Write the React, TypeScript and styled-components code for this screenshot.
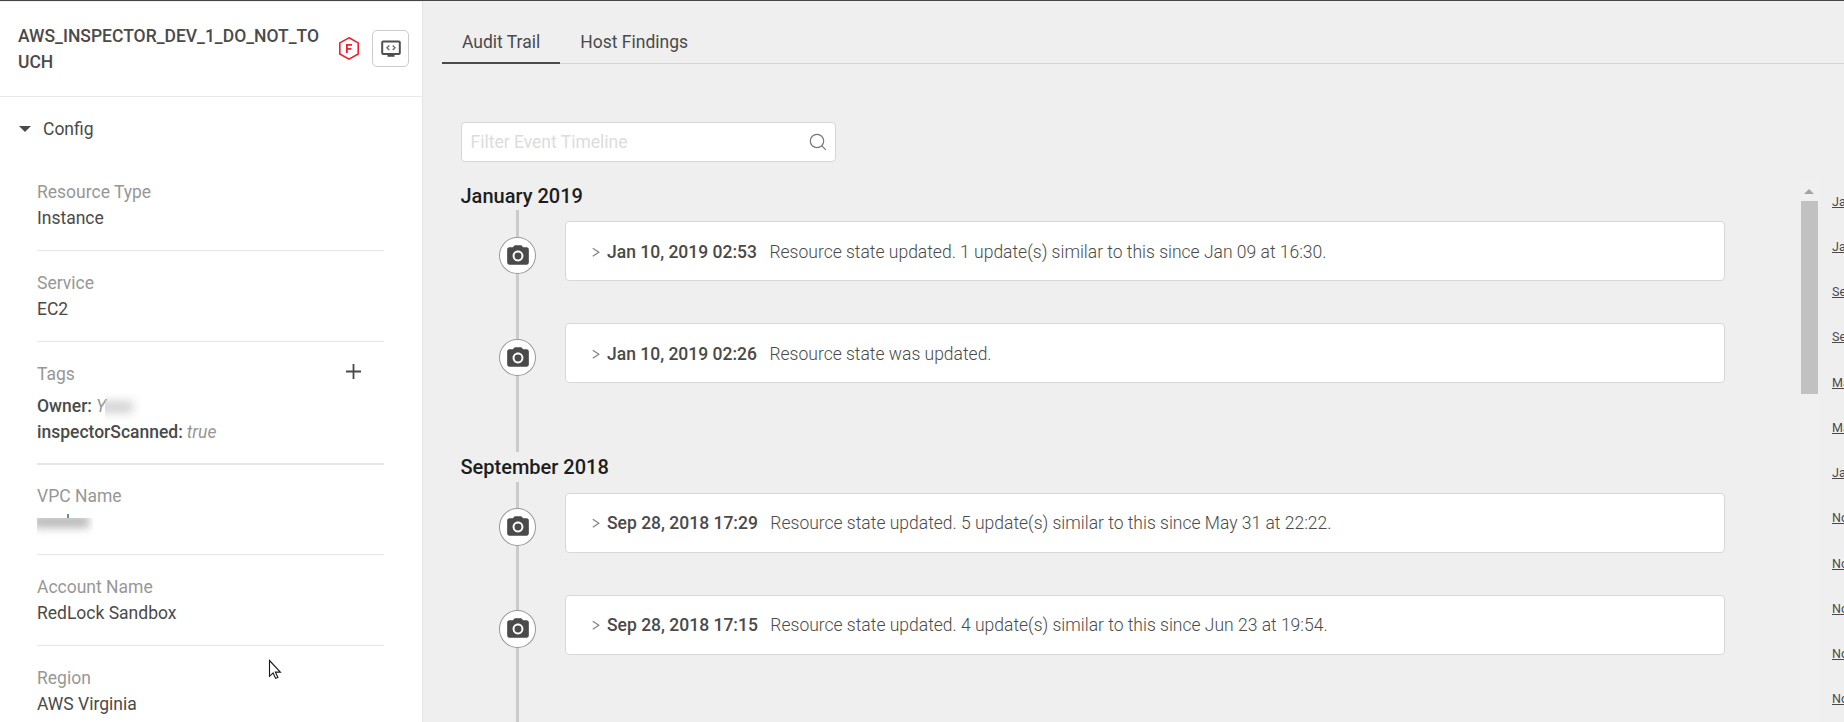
import React from "react";
import styled, { createGlobalStyle } from "styled-components";

const GlobalStyle = createGlobalStyle`
  *, *::before, *::after { box-sizing: border-box; }
  body {
    margin: 0;
    overflow: hidden;
    background: #efefef;
    color: #4a4a4a;
    font-family: Roboto, "Liberation Sans", sans-serif;
    font-size: 17.5px;
    line-height: 26px;
  }
`;

const Page = styled.div`
  display: flex;
  width: 1844px;
  height: 722px;
  overflow: hidden;
  border-top: 1px solid #454545;
`;

const Sidebar = styled.aside`
  position: relative;
  flex: none;
  width: 423px;
  background: #fff;
  border-top: 1px solid #efefef;
  border-right: 1px solid #e4e4e4;
`;

const SidebarHeader = styled.header`
  display: flex;
  align-items: flex-start;
  height: 95px;
  padding: 21px 13px 0 18px;
  border-bottom: 1px solid #e9e9e9;
`;

const ResourceTitle = styled.h1`
  width: 304px;
  margin: 0;
  font-size: 17.5px;
  font-weight: 500;
  word-break: break-all;
`;

const HexIcon = styled.svg`
  flex: none;
  margin: 13px 12px 0 16px;
`;

const ConsoleButton = styled.button`
  display: flex;
  align-items: center;
  justify-content: center;
  width: 37px;
  height: 37px;
  margin-top: 7px;
  padding: 0;
  background: #fff;
  border: 1px solid #ccc;
  border-radius: 5px;
`;

const SectionToggle = styled.div`
  display: flex;
  align-items: center;
  gap: 12.5px;
  padding: 19px 18px 18px 18.5px;
`;

const Caret = styled.span`
  border: 6.5px solid transparent;
  border-top: 6px solid #4a4a4a;
  border-bottom: 0;
`;

const Properties = styled.div`
  padding: 0 38px 0 37px;
`;

const Property = styled.section<{ $thick?: boolean }>`
  padding: ${(p) => (p.$thick ? "19px 0 18px" : "19px 0")};
  border-bottom: ${(p) => (p.$thick ? 2 : 1)}px solid #e6e6e6;
  & + & { padding-top: 19px; }
`;

const AfterThick = styled(Property)`
  && { padding-top: 18px; }
`;

const Label = styled.div`
  display: flex;
  justify-content: space-between;
  color: #979797;
`;

const Value = styled.div`
  display: flow-root;
  height: 26px;
  white-space: nowrap;
`;

const TagList = styled.div`
  padding-top: 6px;
`;

const TagRow = styled.div`
  display: flex;
  height: 26px;
  gap: 4px;
`;

const TagKey = styled.span`
  font-weight: 500;
`;

const TagValue = styled.em`
  color: #979797;
`;

const PlusIcon = styled.svg`
  margin: 2px 22px 0 0;
`;

const Redacted = styled.span<{ $w: number; $h: number }>`
  display: block;
  width: ${(p) => p.$w}px;
  height: ${(p) => p.$h}px;
  overflow: hidden;
`;

const OwnerMask = styled(Redacted)`
  margin-left: -5px;
  &::before {
    content: "";
    display: block;
    width: 36px;
    height: 12px;
    margin: 8px 0 0 -8px;
    background: #d2d2d2;
    filter: blur(5px);
  }
`;

const VpcMask = styled(Redacted)`
  &::before {
    content: "";
    display: block;
    width: 56px;
    height: 13px;
    margin: -3px 0 0 -4px;
    background: #b9bbb9;
    filter: blur(4.5px);
  }
`;

const Ascender = styled.span`
  display: block;
  width: 2px;
  height: 4px;
  margin: 5px 0 0 30px;
  background: #5f8fa6;
`;

const Cursor = styled.svg`
  position: absolute;
  left: 268px;
  top: 657px;
`;

const Main = styled.main`
  flex: 1;
  min-width: 0;
  padding: 9px 0 0 19px;
`;

const Tabs = styled.nav`
  display: flex;
  height: 54px;
  box-shadow: inset 0 -1px 0 #d4d4d4;
`;

const Tab = styled.a<{ $active?: boolean }>`
  padding: 19px 20px 0;
  border-bottom: 2px solid ${(p) => (p.$active ? "#4a4a4a" : "transparent")};
`;

const Content = styled.div`
  padding: 58px 0 0 19px;
`;

const SearchBox = styled.label`
  display: flex;
  align-items: center;
  justify-content: space-between;
  width: 375px;
  height: 40px;
  padding: 0 8px 0 8.5px;
  background: #fff;
  border: 1px solid #d6d6d6;
  border-radius: 4px;
`;

const SearchInput = styled.input`
  width: 300px;
  padding: 0;
  border: 0;
  outline: 0;
  background: none;
  font: inherit;
  color: #4a4a4a;
  &::placeholder { color: #dcdcdc; opacity: 1; }
`;

const Columns = styled.div`
  display: flex;
  align-items: flex-start;
  height: 542px;
  margin-top: 18px;
  overflow: hidden;
`;

const Timeline = styled.div`
  flex: none;
  width: 1338px;
  padding-top: 0.75px;
`;

const Month = styled.h2`
  height: 29.5px;
  margin: 0;
  color: #1d1d1d;
  font-size: 20px;
  font-weight: 500;
  line-height: 30px;
  text-indent: -0.5px;
`;

const MonthEvents = styled.div`
  display: flex;
  flex-direction: column;
  gap: 42px;
  height: 242px;
  padding: 11px 0 0 38px;
  background: linear-gradient(#cbcbcb, #cbcbcb) 55px 0 / 3px 100% no-repeat;
`;

const EventRow = styled.article`
  display: flex;
  align-items: flex-start;
  gap: 29px;
`;

const EventBadge = styled.span`
  display: flex;
  flex: none;
  align-items: center;
  justify-content: center;
  width: 37px;
  height: 37.5px;
  margin-top: 15.5px;
  background: #fff;
  border: 1px solid #999;
  border-radius: 50%;
`;

const EventCard = styled.div`
  display: flex;
  align-items: center;
  width: 1160px;
  height: 60px;
  padding: 1px 0 0 26px;
  background: #fff;
  border: 1px solid #d8d8d8;
  border-radius: 4px;
  white-space: nowrap;
`;

const EventDate = styled.strong`
  margin: 0 12.5px 0 7px;
  font-weight: 500;
`;

const EventText = styled.span`
  font-weight: 300;
`;

const ScrollTrack = styled.div`
  display: flex;
  flex: none;
  flex-direction: column;
  align-items: center;
  width: 20px;
  height: 542px;
  background: #f0f0f0;
`;

const ScrollArrow = styled.span`
  margin: 9px 0 7px;
  border: 5px solid transparent;
  border-top: 0;
  border-bottom: 5px solid #a3a3a3;
`;

const ScrollThumb = styled.span`
  width: 17px;
  height: 193px;
  background: #c1c1c1;
`;

const MonthLinks = styled.div`
  display: flex;
  flex: none;
  flex-direction: column;
  width: 25px;
  padding: 11.5px 0 0 13px;
  overflow: hidden;
`;

const MonthLink = styled.a`
  height: 45.25px;
  font-size: 12.5px;
  line-height: 20px;
  font-weight: 400;
  text-decoration: underline;
  text-underline-offset: 1px;
`;

const months = [
  {
    name: "January 2019",
    events: [
      { date: "Jan 10, 2019 02:53", text: "Resource state updated. 1 update(s) similar to this since Jan 09 at 16:30." },
      { date: "Jan 10, 2019 02:26", text: "Resource state was updated." },
    ],
  },
  {
    name: "September 2018",
    events: [
      { date: "Sep 28, 2018 17:29", text: "Resource state updated. 5 update(s) similar to this since May 31 at 22:22." },
      { date: "Sep 28, 2018 17:15", text: "Resource state updated. 4 update(s) similar to this since Jun 23 at 19:54." },
    ],
  },
];

const links = ["Jan", "Jan", "Sep", "Sep", "May", "May", "Jan", "Nov", "Nov", "Nov", "Nov", "Nov"];

const Camera = () => (
  <svg width="26" height="26" viewBox="0 0 24 24" fill="#4a4a4a">
    <circle cx="12" cy="12" r="3.2" />
    <path d="M9 2 7.17 4H4c-1.1 0-2 .9-2 2v12c0 1.1.9 2 2 2h16c1.1 0 2-.9 2-2V6c0-1.1-.9-2-2-2h-3.17L15 2H9zm3 15c-2.76 0-5-2.24-5-5s2.24-5 5-5 5 2.24 5 5-2.24 5-5 5z" />
  </svg>
);

const Chevron = () => (
  <svg width="8" height="10" viewBox="0 0 8 10" fill="none" stroke="#858585" strokeWidth="1.3">
    <path d="M.8 1.2 6.8 5.2.8 9.2" />
  </svg>
);

export default function App() {
  return (
    <>
      <GlobalStyle />
      <Page>
        <Sidebar>
          <SidebarHeader>
            <ResourceTitle>AWS_INSPECTOR_DEV_1_DO_NOT_TOUCH</ResourceTitle>
            <HexIcon width="22" height="25" viewBox="0 0 22 25" fill="none" stroke="#f0202d">
              <path d="M11 1.8 20.2 6.9V18L11 23.2 1.8 18V6.9Z" strokeWidth="1.6" />
              <path d="M8.9 17V8.8H14M8.9 12.8H13.4" strokeWidth="1.8" />
            </HexIcon>
            <ConsoleButton aria-label="Open console">
              <svg width="20" height="18" viewBox="0 0 20 18" fill="none" stroke="#4f4f4f">
                <rect x="1.2" y="1.5" width="17.6" height="12.5" rx="1" strokeWidth="2" />
                <path d="M6.5 15.7H13.5" strokeWidth="2.2" />
                <path d="M8.3 5.4 6 7.7 8.3 10M11.7 5.4 14 7.7 11.7 10" stroke="#6b6b6b" strokeWidth="1.4" />
              </svg>
            </ConsoleButton>
          </SidebarHeader>
          <SectionToggle>
            <Caret />
            Config
          </SectionToggle>
          <Properties>
            <Property>
              <Label>Resource Type</Label>
              <Value>Instance</Value>
            </Property>
            <Property>
              <Label>Service</Label>
              <Value>EC2</Value>
            </Property>
            <Property $thick>
              <Label>
                Tags
                <PlusIcon width="17" height="17" viewBox="0 0 17 17" stroke="#4a4a4a" strokeWidth="1.8">
                  <path d="M8.5 1V16M1 8.5H16" />
                </PlusIcon>
              </Label>
              <TagList>
                <TagRow>
                  <TagKey>Owner:</TagKey>
                  <TagValue>Y</TagValue>
                  <OwnerMask $w={36} $h={28} />
                </TagRow>
                <TagRow>
                  <TagKey>inspectorScanned:</TagKey>
                  <TagValue>true</TagValue>
                </TagRow>
              </TagList>
            </Property>
            <AfterThick>
              <Label>VPC Name</Label>
              <Value>
                <Ascender />
                <VpcMask $w={56} $h={24} />
              </Value>
            </AfterThick>
            <Property>
              <Label>Account Name</Label>
              <Value>RedLock Sandbox</Value>
            </Property>
            <Property>
              <Label>Region</Label>
              <Value>AWS Virginia</Value>
            </Property>
          </Properties>
          <Cursor width="14" height="21" viewBox="0 0 14 21" fill="#fff" stroke="#15151f" strokeWidth="1.1">
            <path d="M1.5 1.5V17.3L5.1 13.9 7.6 19.4 9.9 18.4 7.4 13.1H12.4Z" />
          </Cursor>
        </Sidebar>
        <Main>
          <Tabs>
            <Tab $active>Audit Trail</Tab>
            <Tab>Host Findings</Tab>
          </Tabs>
          <Content>
            <SearchBox>
              <SearchInput placeholder="Filter Event Timeline" />
              <svg width="18" height="18" viewBox="0 0 18 18" fill="none" stroke="#777" strokeWidth="1.2">
                <circle cx="8" cy="8" r="6.7" />
                <path d="M12.7 12.7 16.8 16.8" />
              </svg>
            </SearchBox>
            <Columns>
              <Timeline>
                {months.map((month) => (
                  <React.Fragment key={month.name}>
                    <Month>{month.name}</Month>
                    <MonthEvents>
                      {month.events.map((event) => (
                        <EventRow key={event.date}>
                          <EventBadge>
                            <Camera />
                          </EventBadge>
                          <EventCard>
                            <Chevron />
                            <EventDate>{event.date}</EventDate>
                            <EventText>{event.text}</EventText>
                          </EventCard>
                        </EventRow>
                      ))}
                    </MonthEvents>
                  </React.Fragment>
                ))}
              </Timeline>
              <ScrollTrack>
                <ScrollArrow />
                <ScrollThumb />
              </ScrollTrack>
              <MonthLinks>
                {links.map((name, i) => (
                  <MonthLink key={i}>{name}</MonthLink>
                ))}
              </MonthLinks>
            </Columns>
          </Content>
        </Main>
      </Page>
    </>
  );
}
